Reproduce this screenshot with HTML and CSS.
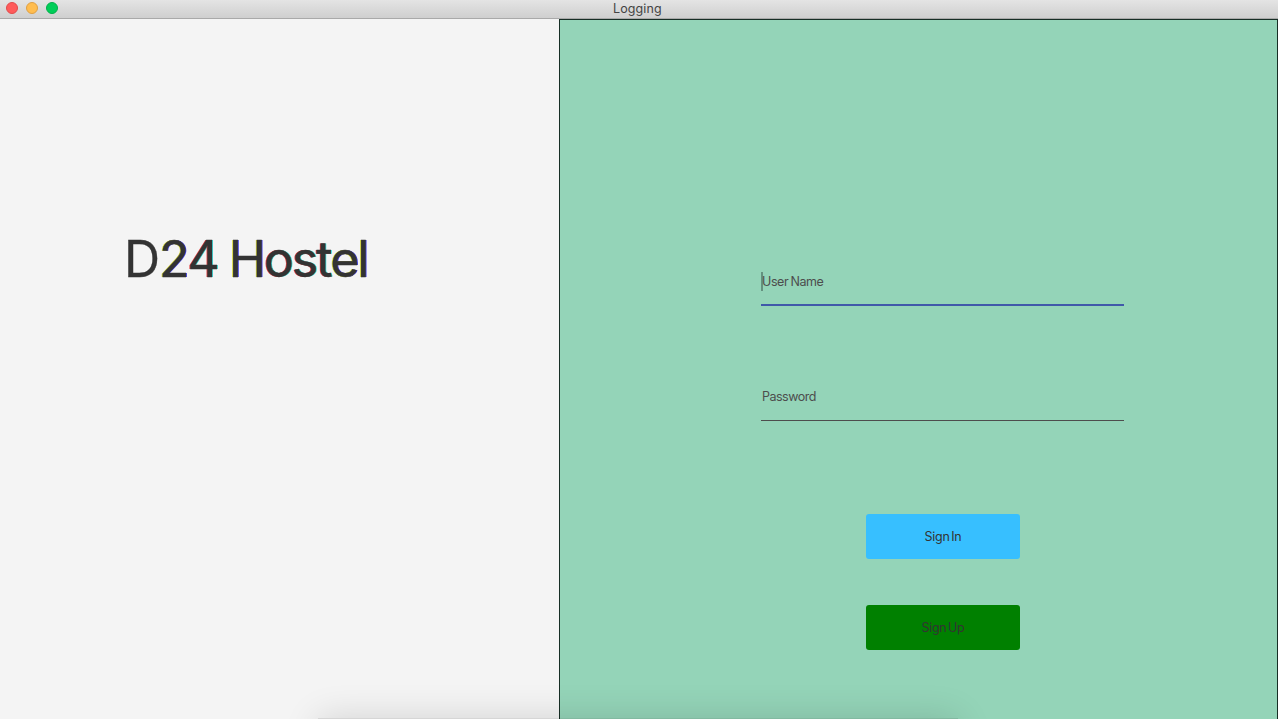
FILE: index.html
```
<!DOCTYPE html>
<html lang="en">
<head>
<meta charset="utf-8">
<title>Logging</title>
<link rel="stylesheet" href="styles.css">
</head>
<body>
<div class="window">
  <header class="titlebar">
    <div class="lights"><span class="light close"></span><span class="light minimize"></span><span class="light maximize"></span></div>
    <span class="title">Logging</span>
  </header>
  <main class="content">
    <section class="brand"><h1 class="brand-name">D<span class="cool">2</span><span class="warm">4</span> <span class="tight"><span class="cool">H</span><span class="warm">ost</span><span class="cool">el</span></span></h1></section>
    <section class="panel">
      <form class="form">
        <div class="field focused"><span class="caret"></span><span class="prompt">User Name</span></div>
        <div class="field"><span class="prompt">Password</span></div>
        <button type="button" class="btn sign-in"><span>Sign In</span></button>
        <button type="button" class="btn sign-up"><span>Sign Up</span></button>
      </form>
    </section>
  </main>
  <div class="dock-shadow"></div>
</div>
</body>
</html>
```
FILE: styles.css
```
* { box-sizing: border-box; }
body { margin: 0; font-family: Inter, "Liberation Sans", sans-serif; color: #333; }
.window { position: relative; width: 1278px; height: 719px; overflow: hidden; display: flex; flex-direction: column; background: #f4f4f4; }
.titlebar { flex: 0 0 19px; display: grid; grid-template-columns: 613px auto; align-items: start; background: linear-gradient(#e4e4e4, #cfcfcf); border-bottom: 1px solid #a9a9a9; }
.lights { display: flex; gap: 8px; padding: 2px 0 0 6px; }
.light { width: 12px; height: 12px; border-radius: 50%; border: 1px solid; }
.close { background: #ff5b5b; border-color: #e24b4b; }
.minimize { background: #ffbd4f; border-color: #dfa044; }
.maximize { background: #00ce58; border-color: #00b04a; }
.title { font-size: 12.5px; line-height: 18px; letter-spacing: 0.1px; color: #444; }
.content { flex: 1; display: flex; min-height: 0; }
.brand { width: 559px; padding: 210px 0 0 124px; }
.brand-name { margin: 0; font-size: 50px; line-height: 61px; font-weight: 400; letter-spacing: -1.1px; word-spacing: -3px; white-space: nowrap; -webkit-text-stroke: 0.35px #333; }
.tight { letter-spacing: -2px; }
/* Colour fringes of subpixel-smoothed lettering */
.cool { text-shadow: -1px 0 #e0e040, 1px 0 #4040e0; }
.warm { text-shadow: -1px 0 #e04040, 1px 0 #40dede; }
.panel { flex: 1; background: #94d4b8; border: 1px solid #172e25; border-bottom: 0; padding: 249px 0 0 201px; }
.form { width: 363px; display: flex; flex-direction: column; align-items: center; }
.field { width: 100%; height: 37px; display: flex; align-items: flex-start; border-bottom: 1px solid #4d4d4d; font-size: 12.5px; line-height: 25px; color: #4d4d4d; margin-bottom: 93px; }
.field.focused { border-bottom: 2px solid #4059a9; margin-bottom: 78px; }
.prompt { padding-left: 1px; white-space: nowrap; letter-spacing: -0.5px; }
.focused .prompt { word-spacing: -1px; letter-spacing: -0.4px; }
.caret { width: 2px; height: 19px; margin: 3px -2px 0 0; background: #64917f; }
.btn { width: 154px; height: 45px; padding: 0; border: 0; border-radius: 3px; font: 12.5px/45px Inter, "Liberation Sans", sans-serif; letter-spacing: -0.3px; word-spacing: -1.5px; color: #333; }
.btn span { padding-left: 1px; }
.sign-in { background: #37bfff; margin-bottom: 46px; }
.sign-up { background: #008000; }
.dock-shadow { position: absolute; left: 318px; top: 718px; width: 640px; height: 60px; background: rgba(0, 0, 0, 0.12); box-shadow: 0 0 36px rgba(0, 0, 0, 0.14); }
```
